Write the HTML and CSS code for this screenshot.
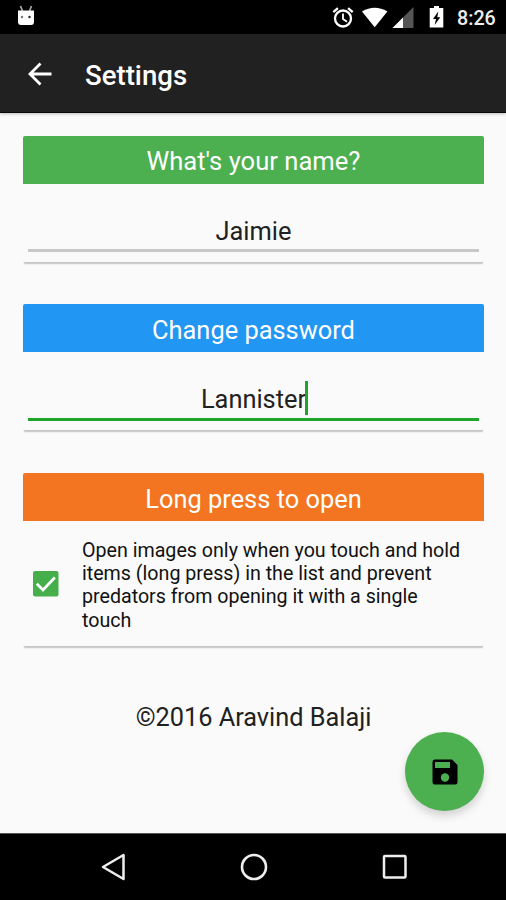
FILE: index.html
```html
<!DOCTYPE html>
<html lang="en">
<head>
<meta charset="utf-8">
<title>Settings</title>
<link rel="stylesheet" href="styles.css">
</head>
<body>
<div class="screen">
  <header class="status">
    <svg class="droid" width="18" height="21" viewBox="0 0 18 21"><path d="M3.500 1l2 5M14.500 1l-2 5" stroke="#aaa" stroke-width="1.700"/><path fill="#fff" d="M1 5.500h16v11q0 3.500-3 3.500H4q-3 0-3-3.500z"/><circle cx="5" cy="12" r="1.200" fill="#777"/><circle cx="12.500" cy="12" r="1.200" fill="#222"/></svg>
    <svg class="tray" width="124" height="26" viewBox="330 4 124 26">
      <g fill="none" stroke="#fff"><circle cx="343" cy="18.500" r="8" stroke-width="2.300"/><path d="M343 13.500v5.500l4 2.700" stroke-width="1.800"/><path d="M333.300 12.200l4.600-4M352.700 12.200l-4.600-4" stroke-width="2.300"/></g>
      <path fill="#fff" d="M362 11.500q12.700-7.500 25.400 0L374.700 27.300z"/>
      <path fill="#555" d="M392.500 28L413.500 7v21z"/><path fill="#fff" d="M392.500 28L403 17.500V28z"/>
      <path fill="#fff" d="M434 6h5v2h4.300v19.500h-13.600V8h4.300z"/><path fill="#000" d="M438.300 11.500l-5.300 7.500h3l-1.300 6 5.600-7.700h-3z"/>
    </svg>
    <span class="clock">8:26</span>
  </header>
  <div class="toolbar">
    <svg class="back" width="24" height="24" viewBox="0 0 24 24"><path d="M23.500 12H2M12.500 1.500L2 12l10.500 10.500" fill="none" stroke="#fff" stroke-width="2.800"/></svg>
    <h1>Settings</h1>
  </div>
  <main>
    <section class="card">
      <h2 class="green">What's your name?</h2>
      <div class="field">Jaimie</div>
    </section>
    <section class="card">
      <h2 class="blue">Change password</h2>
      <div class="field active"><span class="value">Lannister<i class="caret"></i></span></div>
    </section>
    <section class="card long">
      <h2 class="orange">Long press to open</h2>
      <div class="option">
        <svg width="26" height="26" viewBox="0 0 26 26"><rect width="25.500" height="25.500" rx="2" fill="#46ae4b"/><path d="M3.800 12.800l6.200 6.200L21.800 6.500" fill="none" stroke="#fff" stroke-width="2.700"/></svg>
        <p>Open images only when you touch and hold<br>items (long press) in the list and prevent<br>predators from opening it with a single<br>touch</p>
      </div>
    </section>
    <p class="copyright">©2016 Aravind Balaji</p>
  </main>
  <nav>
    <svg width="24" height="28" viewBox="0 0 24 28"><path d="M22.500 2v24L2 14z" fill="none" stroke="#eee" stroke-width="2.500" stroke-linejoin="round"/></svg>
    <svg width="28" height="28" viewBox="0 0 28 28"><circle cx="14" cy="14" r="12" fill="none" stroke="#eee" stroke-width="2.600"/></svg>
    <svg width="26" height="26" viewBox="0 0 26 26"><rect x="2" y="2" width="21.500" height="21.500" rx="1" fill="none" stroke="#eee" stroke-width="2.500"/></svg>
  </nav>
  <div class="fab"><svg width="26" height="26" viewBox="0 0 26 26"><path fill="#000" fill-rule="evenodd" d="M2.500.5h17.500l5.500 5.500v17q0 2.500-2.500 2.500H2.500Q.5 25.500.5 23V3Q.5.5 2.500.5zM3 3v6h15V3zM13 14.300a4.200 4.200 0 100 8.400 4.200 4.200 0 100-8.400z"/></svg></div>
</div>
</body>
</html>
```
FILE: styles.css
```css
* { box-sizing: border-box; margin: 0; }
body { font-family: Roboto, "Liberation Sans", sans-serif; background: #fafafa; color: #212121; }
svg { display: block; flex: none; }
.screen { position: relative; width: 506px; height: 900px; display: flex; flex-direction: column; overflow: hidden; }
.status { height: 34px; background: #000; display: flex; align-items: flex-start; flex: none; }
.droid { margin: 5px 0 0 17px; }
.tray { margin: 4px 0 0 295px; }
.clock { color: #eee; font-weight: 500; font-size: 19.7px; line-height: 24px; margin: 7px 0 0 3px; }
.toolbar { height: 79px; flex: none; background: #212121; border-bottom: 1px solid #080808; display: flex; align-items: center; box-shadow: 0 1px 3px rgba(0,0,0,.25); }
.back { margin: 1px 0 0 28px; }
h1 { color: #fff; font-size: 27.6px; line-height: 34px; font-weight: 500; margin: 6px 0 0 33px; }
main { flex: 1; padding: 23px 22px 0 23px; }
.card { height: 126px; margin-bottom: 42.4px; border-radius: 2px; box-shadow: 0 2.5px 1.5px -1px rgba(0,0,0,.22); background: #fafafa; }
.card.long { height: 173px; }
h2 { height: 48px; border-radius: 2px 2px 0 0; color: #fff; font-weight: 400; font-size: 25.4px; line-height: 51px; text-align: center; white-space: nowrap; }
.green { background: #4caf50; font-size: 25.6px; }
.blue { background: #2196f3; line-height: 52px; }
.orange { background: #f47521; line-height: 52px; }
.field { height: 68px; margin: 0 5px; border-bottom: 3px solid #c8c8c8; font-size: 25.4px; line-height: 30px; padding-top: 32px; text-align: center; }
.field.active { border-bottom-color: #20a52c; height: 69px; }
.value { position: relative; }
.caret { position: absolute; right: -2px; top: -3px; width: 3px; height: 34px; background: #20a52c; }
.option { display: flex; padding: 18.2px 0 0 10px; }
.option svg { margin-top: 32px; }
.option p { margin-left: 23px; font-size: 19.65px; line-height: 23.2px; color: #111; white-space: nowrap; }
.copyright { font-size: 25.3px; line-height: 30px; text-align: center; margin-top: 57px; }
nav { height: 67px; flex: none; background: #000; border-top: 1px solid #555; display: flex; align-items: center; justify-content: space-between; padding: 0 98px 0 101px; }
.fab { position: absolute; left: 405px; top: 732px; width: 79px; height: 79px; border-radius: 50%; background: #4caf50; box-shadow: 0 5px 8px rgba(0,0,0,.16); display: flex; align-items: center; justify-content: center; }
```
